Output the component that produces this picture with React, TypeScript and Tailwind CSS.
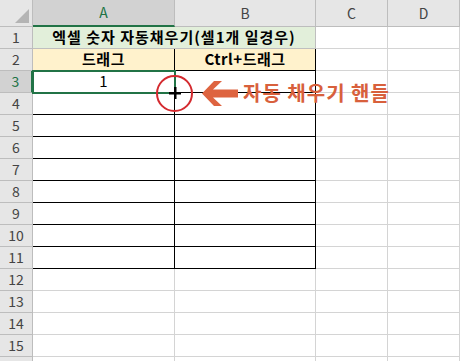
import React from "react";

const cols = ["A", "B", "C", "D"];
const rows = Array.from({ length: 16 }, (_, i) => i + 1);

const font = { fontFamily: '"Noto Sans CJK KR", "Noto Sans", sans-serif' };

function cellClass(r: number, c: number) {
  const inTable = r >= 2 && r <= 11 && c <= 1;
  const cls = "border-r border-b flex items-center justify-center text-[15px] text-black ";
  if (r === 2 && c <= 1) return cls + "bg-[#fff2cc] border-black font-bold tracking-[0.5px]";
  if (inTable) return cls + "bg-white border-black";
  return cls + "bg-white border-[#d4d4d4]";
}

export default function App() {
  return (
    <div className="relative w-[460px] h-[361px] overflow-hidden bg-white" style={font}>
      <div className="grid grid-cols-[33px_142px_141px_72px_72px] grid-rows-[27px_repeat(16,22px)]">
        {/* header row */}
        <div className="relative bg-[#e6e6e6] border-r border-b border-[#bdbdbd]">
          <svg className="absolute right-[3px] bottom-[3px]" width="14" height="14" viewBox="0 0 14 14">
            <polygon points="14,0 14,14 0,14" fill="#b4b4b4" />
          </svg>
        </div>
        {cols.map((c) =>
          c === "A" ? (
            <div key={c} className="bg-[#d2d2d2] border-r border-[#bdbdbd] border-b-2 border-b-[#217346] flex items-center justify-center text-[14px] text-[#217346]">
              {c}
            </div>
          ) : (
            <div key={c} className="bg-[#e6e6e6] border-r border-b border-[#bdbdbd] flex items-center justify-center text-[14px] text-[#444]">
              {c}
            </div>
          )
        )}
        {rows.map((r) => (
          <React.Fragment key={r}>
            {r === 3 ? (
              <div className="bg-[#d2d2d2] border-b border-[#bdbdbd] border-r-2 border-r-[#217346] flex items-center justify-center text-[14px] text-[#217346]">
                {r}
              </div>
            ) : (
              <div className="bg-[#e6e6e6] border-r border-b border-[#bdbdbd] flex items-center justify-center text-[14px] text-[#444]">
                {r < 16 ? r : ""}
              </div>
            )}
            {r === 1 ? (
              <>
                <div className="col-span-2 bg-[#e2efda] border-r border-b border-[#bfbfbf] flex items-center justify-center text-[15px] font-bold tracking-[1px] text-black">
                  엑셀 숫자 자동채우기(셀1개 일경우)
                </div>
                <div className={cellClass(r, 2)} />
                <div className={cellClass(r, 3)} />
              </>
            ) : (
              cols.map((_, c) => (
                <div key={c} className={cellClass(r, c)}>
                  {r === 2 && c === 0 && "드래그"}
                  {r === 2 && c === 1 && "Ctrl+드래그"}
                  {r === 3 && c === 0 && <span className="font-normal">1</span>}
                </div>
              ))
            )}
          </React.Fragment>
        ))}
      </div>

      {/* selection outline on A3 */}
      <div className="absolute left-[32px] top-[70px] w-[144px] h-[24px] border-2 border-[#217346]" />

      {/* red circle with fill-handle cursor */}
      <div className="absolute left-[156px] top-[75px] w-[37px] h-[37px] rounded-full border-[2.5px] border-[#d42a2f]" />
      <svg className="absolute left-[166px] top-[84px]" width="18" height="18" viewBox="0 0 18 18">
        <rect x="8" y="3" width="2.5" height="12" fill="#000" />
        <rect x="3" y="8" width="12" height="2.5" fill="#000" />
      </svg>

      {/* arrow */}
      <svg className="absolute left-[202px] top-[81px]" width="36" height="25" viewBox="0 0 36 25">
        <polygon points="0,12.5 12,0 20,0 11,8.5 36,8.5 36,16.5 11,16.5 20,25 12,25" fill="#de6440" />
      </svg>

      <div className="absolute left-[243px] top-[80px] text-[20px] font-bold tracking-[1px] text-[#d8603c] leading-[26px] whitespace-nowrap">
        자동 채우기 핸들
      </div>
    </div>
  );
}
